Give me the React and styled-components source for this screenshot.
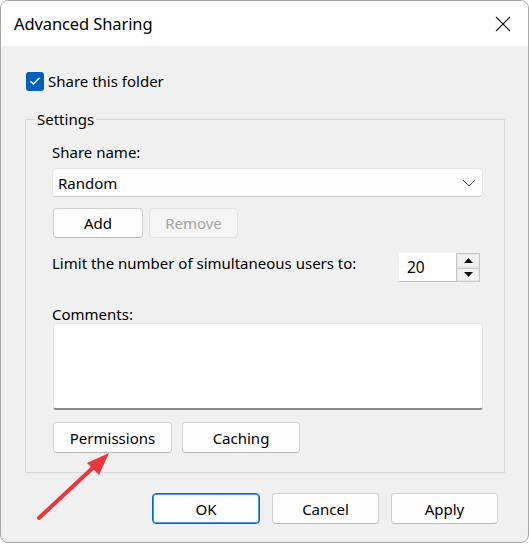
import React from 'react';
import styled, { createGlobalStyle } from 'styled-components';

const GlobalStyle = createGlobalStyle`
  html, body {
    margin: 0;
    padding: 0;
    background: #ffffff;
  }
  body {
    font-family: "Noto Sans", "Segoe UI", sans-serif;
    font-size: 15px;
    color: #000;
  }
`;

const Window = styled.div`
  position: relative;
  width: 527px;
  height: 541px;
  background: #f0f0f0;
  border: 1px solid #a8a8a8;
  border-radius: 8px;
  overflow: hidden;
  display: flex;
  flex-direction: column;
`;

const TitleBar = styled.div`
  height: 45px;
  background: #ffffff;
  display: flex;
  align-items: center;
  justify-content: space-between;
  padding: 0 17px 0 13px;
  flex-shrink: 0;
`;

const Title = styled.div`
  font-size: 16.5px;
  letter-spacing: -0.1px;
`;

const CloseBtn = styled.div`
  width: 16px;
  height: 16px;
  display: flex;
`;

const Body = styled.div`
  display: flex;
  flex-direction: column;
  padding: 25px 0 0 24px;
`;

const CheckRow = styled.label`
  display: flex;
  align-items: center;
  gap: 4px;
  height: 20px;
  margin-left: 1px;
`;

const CheckBox = styled.span`
  width: 18px;
  height: 19px;
  border-radius: 3px;
  background: #005fb8;
  display: flex;
  align-items: center;
  justify-content: center;
`;

const Group = styled.fieldset`
  width: 480px;
  box-sizing: border-box;
  margin: 18px 0 0 0;
  padding: 13px 21px 19px 26px;
  border: 1px solid #d9d9d9;
  min-width: 0;
`;

const Legend = styled.legend`
  padding: 0 2px;
  margin-left: -17px;
  line-height: 20px;
`;

const Label = styled.div`
  line-height: 20px;
  height: ${(p) => p.h || 20}px;
`;

const Select = styled.div`
  margin-top: 6px;
  height: 29px;
  box-sizing: border-box;
  background: #fdfdfd;
  border: 1px solid #e5e5e5;
  border-bottom-color: #c9c9c9;
  border-radius: 4px;
  display: flex;
  align-items: center;
  justify-content: space-between;
  padding: 0 6px 0 5px;
`;

const ButtonRow = styled.div`
  display: flex;
  gap: ${(p) => p.gap || 6}px;
  margin-top: ${(p) => p.mt || 0}px;
  margin-left: ${(p) => p.ml || 0}px;
`;

const Button = styled.button`
  width: ${(p) => p.w}px;
  height: ${(p) => p.h || 30}px;
  box-sizing: border-box;
  font-family: inherit;
  font-size: 15px;
  color: ${(p) => (p.disabled ? '#a3a3a3' : '#000')};
  background: ${(p) => (p.disabled ? '#f5f5f5' : '#fdfdfd')};
  border: 1px solid ${(p) => (p.primary ? '#0067c0' : p.disabled ? '#e3e3e3' : '#d3d3d3')};
  border-bottom-color: ${(p) => (p.primary ? '#0067c0' : p.disabled ? '#e3e3e3' : '#bababa')};
  box-shadow: ${(p) => (p.primary ? 'inset 0 0 0 1px #4f97d8' : 'none')};
  border-radius: 4px;
  padding: 0;
`;

const LimitRow = styled.div`
  display: flex;
  justify-content: space-between;
  align-items: flex-start;
  margin-top: 15px;
  padding-right: 3px;
`;

const Spinner = styled.div`
  display: flex;
  height: 29px;
`;

const SpinInput = styled.div`
  width: 57px;
  box-sizing: border-box;
  background: #ffffff;
  border-bottom: 1px solid #c4c4c4;
  padding-left: 8px;
  line-height: 29px;
  font-size: 15.5px;
`;

const SpinArrows = styled.div`
  width: 24px;
  box-sizing: border-box;
  border: 1px solid #c8c8c8;
  background: #e6e6e6;
  display: flex;
  flex-direction: column;
`;

const SpinBtn = styled.div`
  flex: 1;
  display: flex;
  align-items: center;
  justify-content: center;
  background: #f2f2f2;
  margin: 1px;
  border-top: ${(p) => (p.down ? '1px solid #c8c8c8' : 'none')};
`;

const TextArea = styled.div`
  margin-left: 1px;
  height: 87px;
  box-sizing: border-box;
  background: #ffffff;
  border: 1px solid #e6e6e6;
  border-bottom: 2px solid #8a8a8a;
  border-radius: 3px;
`;

const Footer = styled.div`
  display: flex;
  justify-content: flex-end;
  gap: 12px;
  margin-top: 20px;
  padding-right: 30px;
`;

const Arrow = styled.svg`
  position: absolute;
  left: 0;
  top: 0;
  pointer-events: none;
`;

export default function App() {
  return (
    <>
      <GlobalStyle />
      <Window>
        <TitleBar>
          <Title>Advanced Sharing</Title>
          <CloseBtn>
            <svg width="16" height="16" viewBox="0 0 16 16">
              <path d="M1 1 L15 15 M15 1 L1 15" stroke="#1a1a1a" strokeWidth="1.1" fill="none" />
            </svg>
          </CloseBtn>
        </TitleBar>
        <Body>
          <CheckRow>
            <CheckBox>
              <svg width="12" height="10" viewBox="0 0 12 10">
                <path d="M1.5 5.2 L4.5 8 L10.5 1.8" stroke="#fff" strokeWidth="1.3" fill="none" />
              </svg>
            </CheckBox>
            Share this folder
          </CheckRow>
          <Group>
            <Legend>Settings</Legend>
            <Label>Share name:</Label>
            <Select>
              <span>Random</span>
              <svg width="14" height="8" viewBox="0 0 14 8">
                <path d="M1 1 L7 7 L13 1" stroke="#606060" strokeWidth="1" fill="none" />
              </svg>
            </Select>
            <ButtonRow mt={11} ml={1}>
              <Button w={90}>Add</Button>
              <Button w={89} disabled>Remove</Button>
            </ButtonRow>
            <LimitRow>
              <Label>Limit the number of simultaneous users to:</Label>
              <Spinner>
                <SpinInput>20</SpinInput>
                <SpinArrows>
                  <SpinBtn>
                    <svg width="9" height="5" viewBox="0 0 9 5"><path d="M0 5 L4.5 0 L9 5 Z" fill="#111" /></svg>
                  </SpinBtn>
                  <SpinBtn down>
                    <svg width="9" height="5" viewBox="0 0 9 5"><path d="M0 0 L4.5 5 L9 0 Z" fill="#111" /></svg>
                  </SpinBtn>
                </SpinArrows>
              </Spinner>
            </LimitRow>
            <Label h={19} style={{ marginTop: 22 }}>Comments:</Label>
            <TextArea />
            <ButtonRow mt={12} ml={1} gap={10}>
              <Button w={119} h={31}>Permissions</Button>
              <Button w={118} h={31}>Caching</Button>
            </ButtonRow>
          </Group>
        </Body>
        <Footer>
          <Button w={108} h={31} primary>OK</Button>
          <Button w={107} h={31}>Cancel</Button>
          <Button w={107} h={31}>Apply</Button>
        </Footer>
        <Arrow width="529" height="546" viewBox="0 0 529 546">
          <path d="M38 517 L97 462" stroke="#e8383d" strokeWidth="4" strokeLinecap="round" />
          <path d="M108 452 L86 462 L98 474 Z" fill="#e8383d" />
        </Arrow>
      </Window>
    </>
  );
}
